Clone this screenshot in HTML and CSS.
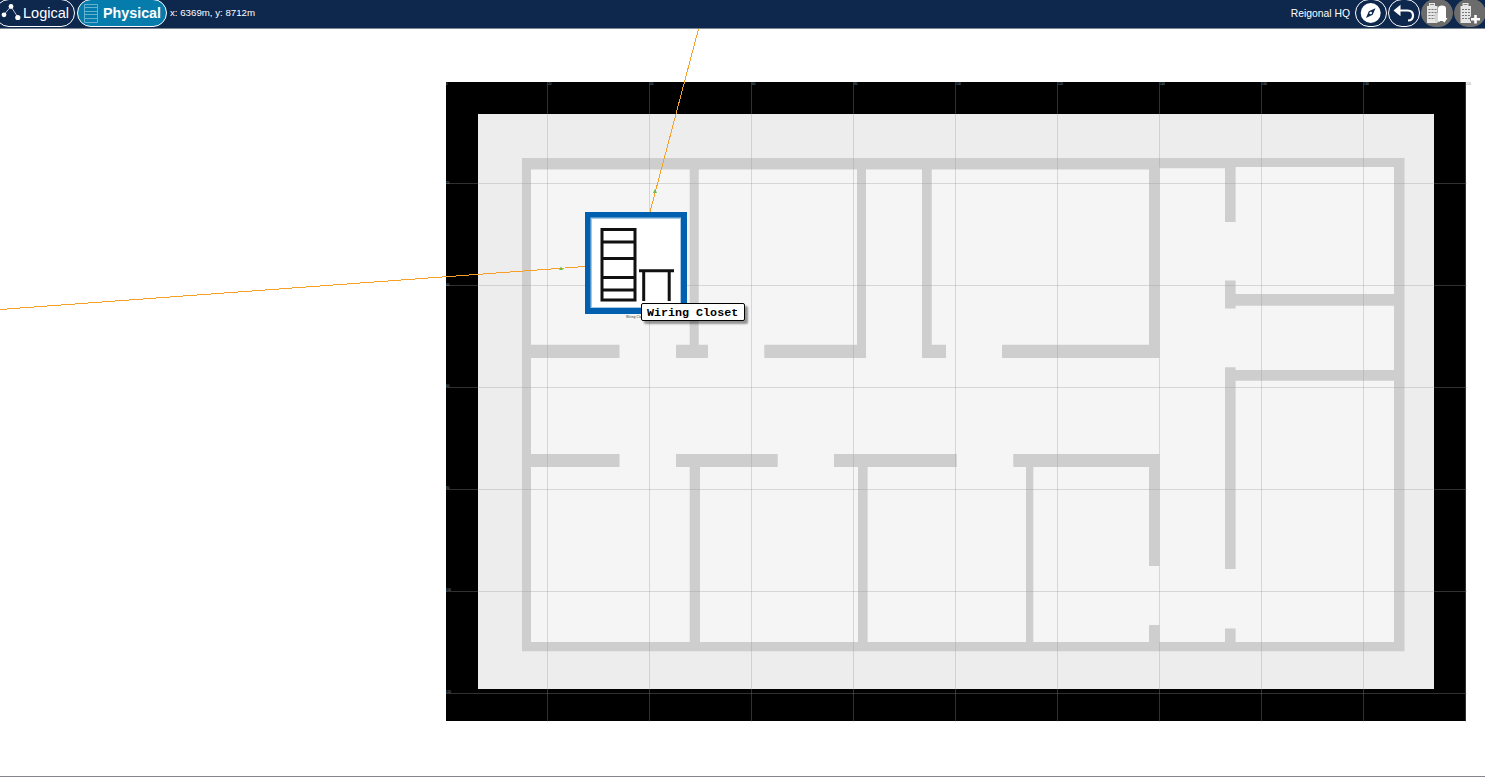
FILE: index.html
```html
<!DOCTYPE html>
<html lang="en">
<head>
<meta charset="utf-8">
<title>Physical Workspace</title>
<link rel="stylesheet" href="styles.css">
</head>
<body>
<header class="bar">
  <button class="tab logical">
    <svg width="21" height="26" viewBox="0 0 21 26"><path d="M4 14.500 11 6.500 18 17.500" fill="none" stroke="#b9c4d3" stroke-width="1"/><circle cx="4" cy="14.800" r="2.400" fill="#fff"/><circle cx="11" cy="6.500" r="2.400" fill="#fff"/><circle cx="17.800" cy="17.500" r="2.600" fill="#fff"/></svg>
    <span>Logical</span>
  </button>
  <button class="tab physical">
    <svg width="14" height="19" viewBox="0 0 14 19"><path d="M.5.5h13v18H.5zM.5 3.500h13M.5 7.500h13M.5 10.500h13M.5 14.500h13" fill="none" stroke="#64b1d0" stroke-width="1"/></svg>
    <span>Physical</span>
  </button>
  <span class="coords">x: 6369m, y: 8712m</span>
  <span class="place">Reigonal HQ</span>
  <nav class="tools">
    <button class="tool"><svg width="32" height="28" viewBox="0 0 32 28"><circle cx="15.700" cy="13" r="10" fill="#fff"/><path d="M20.500 8.300 17.700 14.800 11 17.900 13.800 11.200z" fill="#0e274d"/><circle cx="15.700" cy="13" r="1.300" fill="#fff"/></svg></button>
    <button class="tool"><svg width="32" height="28" viewBox="0 0 32 28"><path d="M10 10.500h9.500q5.500 0 5.500 5t-5 5" fill="none" stroke="#fff" stroke-width="2.200"/><path d="M5.500 10.500 12.500 4.800v11.400z" fill="#fff"/></svg></button>
    <button class="tool off"><svg width="32" height="28" viewBox="0 0 32 28"><path d="M8 3h6v3h2.500v17H6V6h2z" fill="#e6e6e6"/><path d="M9 4.500h4" stroke="#8a8a8a"/><path d="M7.500 9.500h8M7.500 12.500h8M7.500 15.500h8M7.500 18.500h8" stroke="#777" stroke-dasharray="2 1"/><path d="M14 13h5v9h-5z" fill="#d4d4d4"/><path d="M17 8.500q0-3 4-3t4 3V18h1.500l-3 4.500-2-1.500h-4.500z" fill="#fff"/></svg></button>
    <button class="tool off"><svg width="32" height="28" viewBox="0 0 32 28"><path d="M8.500 3h6v3H17v17H6.500V6h2z" fill="#e6e6e6"/><path d="M9.500 4.500h4" stroke="#8a8a8a"/><path d="M8 9.500h8M8 12.500h8M8 15.500h8M8 18.500h8" stroke="#777" stroke-dasharray="2 1"/><path d="M21.500 14v10M16 19h10" stroke="#6c6c6c" stroke-width="4.500"/><path d="M21.500 15v8.500M17 19.200h9" stroke="#fff" stroke-width="2.600"/></svg></button>
  </nav>
</header>
<main class="workspace">
  <svg class="plan" width="1485" height="747" viewBox="0 29 1485 747">
    <defs><filter id="soft" color-interpolation-filters="sRGB"><feGaussianBlur stdDeviation=".7"/></filter></defs>
    <path class="site" d="M446 82h1020v639H446z"/>
    <path class="ground" d="M478 114h956v575H478z"/>
    <path class="wall" d="M522 158h882.500v493.300H522z"/>
    <path class="floor" d="M531 169.600H1149V167h10.500v1.200H1225V167h169v475H531z"/>
    <path class="wall" d="M689.700 169h9v176h-9zM857 169h9v189h-9zM922 169h9.700v189H922zM1149 160h10.300v198H1149zM531 344.700h88.500V358H531zM676 344.700h32V358h-32zM764.300 344.700H866V358H764.300zM922 344.700h24V358h-24zM1002 344.700h157V358h-157z"/>
    <path class="wall" d="M531 454h88.500v13H531zM676 454h101.700v13H676zM834 454h122.700v13H834zM1013.300 454h146v13h-146zM689.700 467h10.300v175h-10.300zM858 467h9.600v175H858zM1026 467h7.300v175H1026zM1149 467h10.300v99H1149zM1149 625h10.300v17H1149z"/>
    <path class="wall" d="M1225 160h10.600v62H1225zM1225 280.600h10.600v28H1225zM1225 367.300h10.600V569H1225zM1225 628.500h10.600V642H1225zM1235 294h160v11.700h-160zM1235 370h160v10.700h-160z"/>
    <path class="grid" d="M547.500 82v640M649.500 82v640M751.500 82v640M853.500 82v640M955.500 82v640M1057.500 82v640M1159.500 82v640M1261.500 82v640M1363.500 82v640M1465.500 82v640M446 183.500h1021M446 285.500h1021M446 387.500h1021M446 489.500h1021M446 591.500h1021M446 693.500h1021"/>
    <g class="scale">
      <text x="446" y="85">0</text><text x="548" y="85">20</text><text x="650" y="85">40</text><text x="752" y="85">60</text><text x="854" y="85">80</text><text x="956" y="85">100</text><text x="1058" y="85">120</text><text x="1160" y="85">140</text><text x="1262" y="85">160</text><text x="1364" y="85">180</text><text x="1466" y="85">200</text>
      <text x="446" y="184">20</text><text x="446" y="286">40</text><text x="446" y="387">60</text><text x="446" y="489">80</text><text x="446" y="591">100</text><text x="446" y="693">120</text>
    </g>
    <path class="link" d="M698.500 29 650 212M0 309.500 585 266.500"/>
    <path class="up" d="M655 189l2 4h-4zM561 266.500l2 3.500h-4z"/>
    <g class="closet">
      <path class="frame" d="M585 212h102v102H585z"/>
      <path class="glow" d="M590.500 217.500h90.500v90.500h-90.500z"/>
      <path class="face" d="M592 219h88v88h-88z"/>
      <path class="rack" filter="url(#soft)" d="M602 229.500h33V300h-33zM602 242h33M602 258.500h33M602 277.500h33M602 290h33M639 270.800h35M643.700 271v30M669.200 271v30"/>
      <text class="name" x="626" y="318" textLength="20">Wiring Closet</text>
    </g>
  </svg>
  <div class="tip">Wiring Closet</div>
</main>
</body>
</html>
```

FILE: styles.css
```css
* { box-sizing: border-box; }
body { margin: 0; height: 777px; overflow: hidden; display: flex; flex-direction: column; background: #fff; font-family: "Liberation Sans", Arial, sans-serif; }
button { margin: 0; padding: 0; font: inherit; color: #fff; background: none; }
.bar { flex: none; display: flex; align-items: flex-start; height: 29px; overflow: hidden; background: #0e274d; border-bottom: 1px solid #7f8591; color: #fff; }
.tab { flex: none; display: flex; align-items: center; height: 28px; margin-top: -1px; border: 1px solid #fff; border-radius: 14px; font-size: 14.500px; white-space: nowrap; }
.logical { width: 80px; margin-left: -5px; padding-left: 4px; gap: 2px; }
.physical { width: 90px; margin-left: 2px; padding-left: 6px; gap: 5px; background: #057cab; font-size: 14.300px; font-weight: bold; }
.coords { margin: 7px 0 0 3px; font-size: 9.700px; line-height: 12px; }
.place { margin: 8px 5px 0 auto; font-size: 10.350px; line-height: 12px; }
.tools { flex: none; display: flex; gap: 1px; margin-right: -1px; }
.tool { flex: none; width: 32px; height: 28px; margin-top: -1px; border: 1px solid #fff; border-radius: 14px; display: flex; align-items: flex-start; justify-content: center; overflow: hidden; }
.tool svg { flex: none; }
.off { background: #6c6c6c; border-color: #6c6c6c; }
.workspace { position: relative; flex: 1; border-bottom: 1px solid #85858d; }
.plan { display: block; }
.site { fill: #000; }
.ground { fill: #ededed; }
.wall { fill: #cecece; }
.floor { fill: #f5f5f5; }
.grid { stroke: #969696; stroke-opacity: .32; }
.scale { font-size: 3px; fill: #8b8f9b; }
.link { stroke: #f7a027; stroke-width: 1; shape-rendering: crispEdges; }
.up { fill: #68bd45; }
.frame { fill: #0060af; }
.glow { fill: #a5c9e5; }
.face { fill: #fff; }
.rack { fill: none; stroke: #111; stroke-width: 3; }
.name { font-size: 3px; fill: #222; }
.tip { position: absolute; left: 641px; top: 274px; width: 104px; height: 18px; padding-left: 5px; border: 1px solid #000; border-radius: 2px; background: #fff; box-shadow: 3px 3px 2px rgba(0,0,0,.4); font: bold 11.700px/18px "Liberation Mono", "Courier New", monospace; color: #000; white-space: nowrap; }
```
